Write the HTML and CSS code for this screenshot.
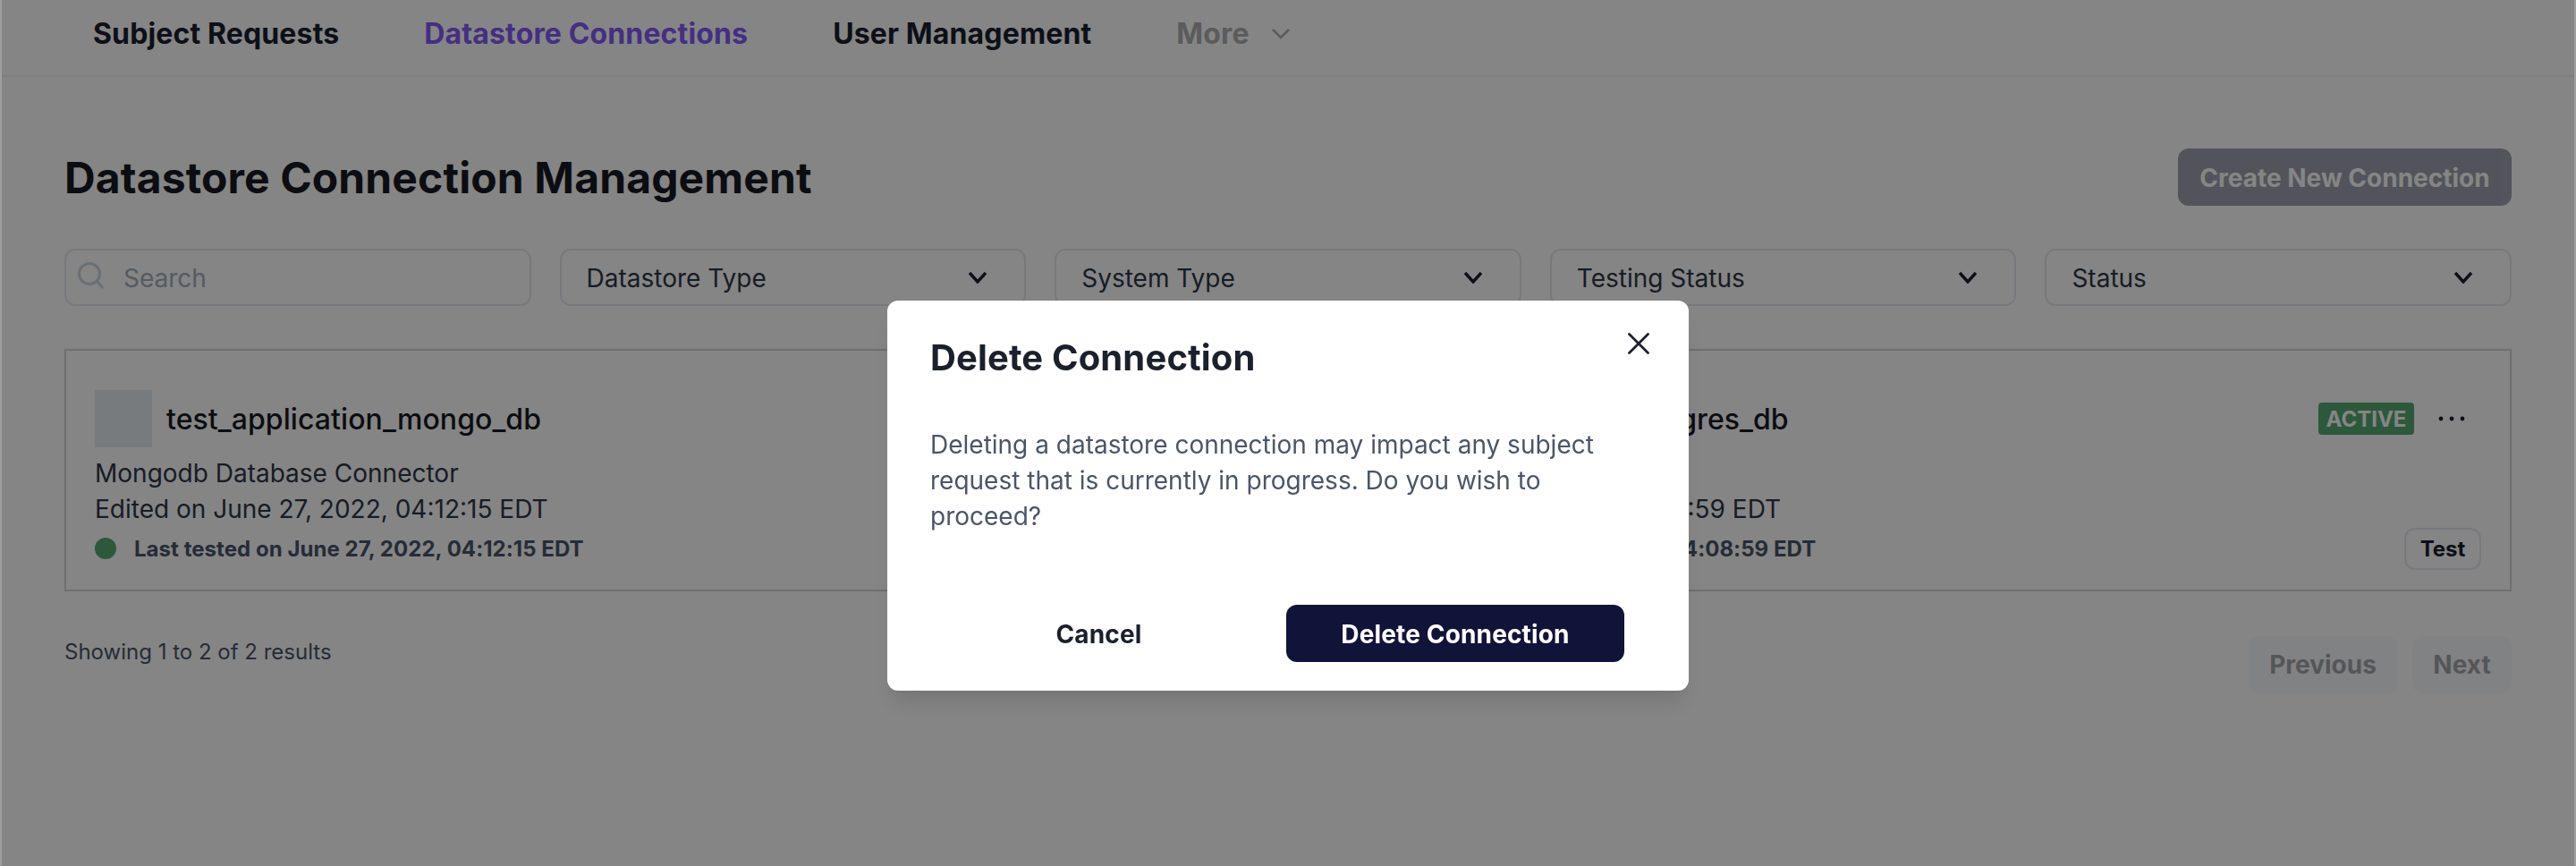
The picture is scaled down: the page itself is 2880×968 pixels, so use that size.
FILE: index.html
```html
<!DOCTYPE html>
<html lang="en">
<head>
<meta charset="utf-8">
<title>Datastore Connection Management</title>
<link rel="stylesheet" href="styles.css">
</head>
<body>
<div class="page">
  <nav class="nav">
    <a class="nav-link">Subject Requests</a>
    <a class="nav-link active">Datastore Connections</a>
    <a class="nav-link">User Management</a>
    <a class="nav-link more">More
      <svg class="more-chevron" viewBox="0 0 20 13" fill="none" stroke="currentColor" stroke-width="2.6"><path d="M1 2l9 9 9-9"/></svg>
    </a>
  </nav>
  <main class="main">
    <header class="head">
      <h1 class="title">Datastore Connection Management</h1>
      <button class="btn-create">Create New Connection</button>
    </header>
    <section class="filters">
      <div class="filter search">
        <svg class="search-icon" viewBox="0 0 32 32" fill="none" stroke="currentColor" stroke-width="3"><circle cx="14" cy="13" r="11.5"/><path d="M22.5 21.5L29 29"/></svg>
        <span class="search-text">Search</span>
      </div>
      <div class="filter"><span>Datastore Type</span><svg class="chev" viewBox="0 0 22 14" fill="none" stroke="currentColor" stroke-width="3.4"><path d="M2 2l9 10 9-10"/></svg></div>
      <div class="filter"><span>System Type</span><svg class="chev" viewBox="0 0 22 14" fill="none" stroke="currentColor" stroke-width="3.4"><path d="M2 2l9 10 9-10"/></svg></div>
      <div class="filter"><span>Testing Status</span><svg class="chev" viewBox="0 0 22 14" fill="none" stroke="currentColor" stroke-width="3.4"><path d="M2 2l9 10 9-10"/></svg></div>
      <div class="filter"><span>Status</span><svg class="chev" viewBox="0 0 22 14" fill="none" stroke="currentColor" stroke-width="3.4"><path d="M2 2l9 10 9-10"/></svg></div>
    </section>
    <section class="cards">
      <article class="card">
        <div class="card-head">
          <div class="logo"></div>
          <h2 class="card-name">test_application_mongo_db</h2>
        </div>
        <p class="meta">Mongodb Database Connector</p>
        <p class="meta">Edited on June 27, 2022, 04:12:15 EDT</p>
        <div class="tested"><span class="dot"></span><span>Last tested on June 27, 2022, 04:12:15 EDT</span></div>
      </article>
      <article class="card">
        <div class="card-head">
          <div class="logo"></div>
          <h2 class="card-name">test_application_postgres_db</h2>
          <span class="badge">ACTIVE</span>
          <svg class="dots" viewBox="0 0 30 6" fill="currentColor"><circle cx="3" cy="3" r="2.4"/><circle cx="15" cy="3" r="2.4"/><circle cx="27" cy="3" r="2.4"/></svg>
        </div>
        <p class="meta">Postgres Database Connector</p>
        <p class="meta">Edited on June 27, 2022, 04:08:59 EDT</p>
        <div class="tested"><span class="dot"></span><span>Last tested on June 27, 2022, 04:08:59 EDT</span><button class="btn-test">Test</button></div>
      </article>
    </section>
    <footer class="pager">
      <span class="count">Showing 1 to 2 of 2 results</span>
      <div class="pager-btns">
        <button class="btn-page prev">Previous</button>
        <button class="btn-page nxt">Next</button>
      </div>
    </footer>
  </main>
</div>
<div class="overlay"></div>
<div class="modal">
  <svg class="close" viewBox="0 0 24 24" fill="none" stroke="currentColor" stroke-width="2.8" stroke-linecap="round"><path d="M1.5 1.5l21 21M22.5 1.5l-21 21"/></svg>
  <h3 class="modal-title">Delete Connection</h3>
  <p class="modal-body">Deleting a datastore connection may impact any subject request that is currently in progress. Do you wish to proceed?</p>
  <div class="modal-actions">
    <button class="btn-cancel">Cancel</button>
    <button class="btn-delete">Delete Connection</button>
  </div>
</div>
</body>
</html>
```
FILE: styles.css
```css
* { box-sizing: border-box; }
html, body { margin: 0; height: 100%; }
body { background: #fff; font-family: Inter, "Noto Sans", sans-serif; color: #1a202c; overflow: hidden; }
h1, h2, h3, p { margin: 0; }
button { font-family: inherit; border: 0; }
.page { height: 968px; padding: 0 2px; }
.nav { height: 86px; display: flex; align-items: center; gap: 95px; padding: 0 0 10px 102px; border-bottom: 2px solid #edf2f7; }
.nav-link { font-size: 32px; font-weight: 700; letter-spacing: .14px; color: #1a202c; display: flex; align-items: center; gap: 25px; }
.nav-link.active { color: #825af9; }
.nav-link.more { color: #aeaeb2; }
.more-chevron { width: 20px; height: 13px; }
.main { padding: 80px 70px 0; }
.head { display: flex; justify-content: space-between; align-items: center; height: 64px; }
.title { font-size: 48px; font-weight: 700; letter-spacing: .12px; line-height: 64px; color: #171923; padding-top: 2px; }
.btn-create { height: 64px; width: 373px; padding-top: 2px; border-radius: 12px; background: #111439; color: #fff; font-size: 28px; font-weight: 700; opacity: .4; }
.filters { display: grid; grid-template-columns: repeat(5, 1fr); gap: 32px; margin-top: 48px; }
.filter { height: 64px; border: 2px solid #e2e8f0; border-radius: 12px; display: flex; align-items: center; justify-content: space-between; padding: 2px 41px 0 28px; font-size: 28px; color: #2d3748; }
.chev { width: 22px; height: 14px; color: #1a202c; margin-top: -2px; }
.search { justify-content: flex-start; padding: 2px 0 0 12px; }
.search-icon { width: 32px; height: 32px; color: #cbd5e0; margin-top: -4px; }
.search-text { color: #a0aec0; margin-left: 20px; }
.cards { display: grid; grid-template-columns: 1fr 1fr; margin-top: 48px; height: 271px; border: 2px solid #d5d5d5; }
.card { padding: 44px 32px 0; }
.card-head { display: flex; align-items: center; gap: 16px; height: 64px; }
.logo { width: 64px; height: 64px; background: #e4ecf2; flex: none; }
.card-name { font-size: 32px; font-weight: 500; letter-spacing: .08px; color: #171923; flex: 1; }
.badge { background: #55ab6f; color: #fff; height: 36px; width: 107px; border-radius: 4px; font-size: 24px; font-weight: 700; display: flex; align-items: center; justify-content: center; }
.dots { width: 30px; height: 6px; color: #1a202c; margin: 0 18px 0 11px; flex: none; }
.meta { font-size: 28px; line-height: 40px; color: #2d3748; }
.meta:first-of-type { margin-top: 9px; }
.tested { display: flex; align-items: center; gap: 20px; font-size: 24px; font-weight: 700; letter-spacing: .05px; color: #4a5568; height: 48px; }
.dot { width: 24px; height: 24px; border-radius: 50%; background: #55ab6f; flex: none; }
.btn-test { margin-left: auto; width: 86px; height: 47px; border: 2px solid #e2e8f0; border-radius: 12px; background: #fff; font-size: 24px; font-weight: 700; color: #1a202c; }
.pager { display: flex; justify-content: space-between; margin-top: 50px; }
.count { font-size: 24px; line-height: 36px; color: #4a5568; }
.pager-btns { display: flex; gap: 17px; }
.btn-page { height: 64px; border-radius: 12px; background: #edf2f7; color: #1a202c; font-size: 28px; font-weight: 700; opacity: .4; }
.prev { width: 166px; }
.nxt { width: 111px; }
.overlay { position: fixed; inset: 0; background: rgba(0,0,0,.48); background-clip: padding-box; border-left: 2px solid rgba(0,0,0,.38); border-right: 2px solid rgba(0,0,0,.38); }
.modal { position: fixed; left: 992px; top: 336px; width: 896px; height: 436px; background: #fff; border-radius: 12px; padding: 40px 72px 32px 48px; box-shadow: 0 20px 25px -5px rgba(0,0,0,.1), 0 10px 10px -5px rgba(0,0,0,.04); }
.close { position: absolute; left: 828px; top: 36px; width: 24px; height: 24px; color: #1a202c; }
.modal-title { font-size: 40px; font-weight: 700; letter-spacing: .14px; line-height: 48px; color: #1a202c; }
.modal-body { font-size: 28px; line-height: 40px; color: #4a5568; margin-top: 53px; width: 780px; }
.modal-actions { display: flex; justify-content: space-between; align-items: center; margin-top: 79px; }
.btn-cancel { width: 377px; height: 64px; padding-top: 2px; background: none; font-size: 28px; font-weight: 700; letter-spacing: .15px; color: #1a202c; }
.btn-delete { width: 378px; height: 64px; padding-top: 2px; background: #111439; color: #fff; font-size: 28px; font-weight: 700; letter-spacing: .15px; border-radius: 12px; }
```
